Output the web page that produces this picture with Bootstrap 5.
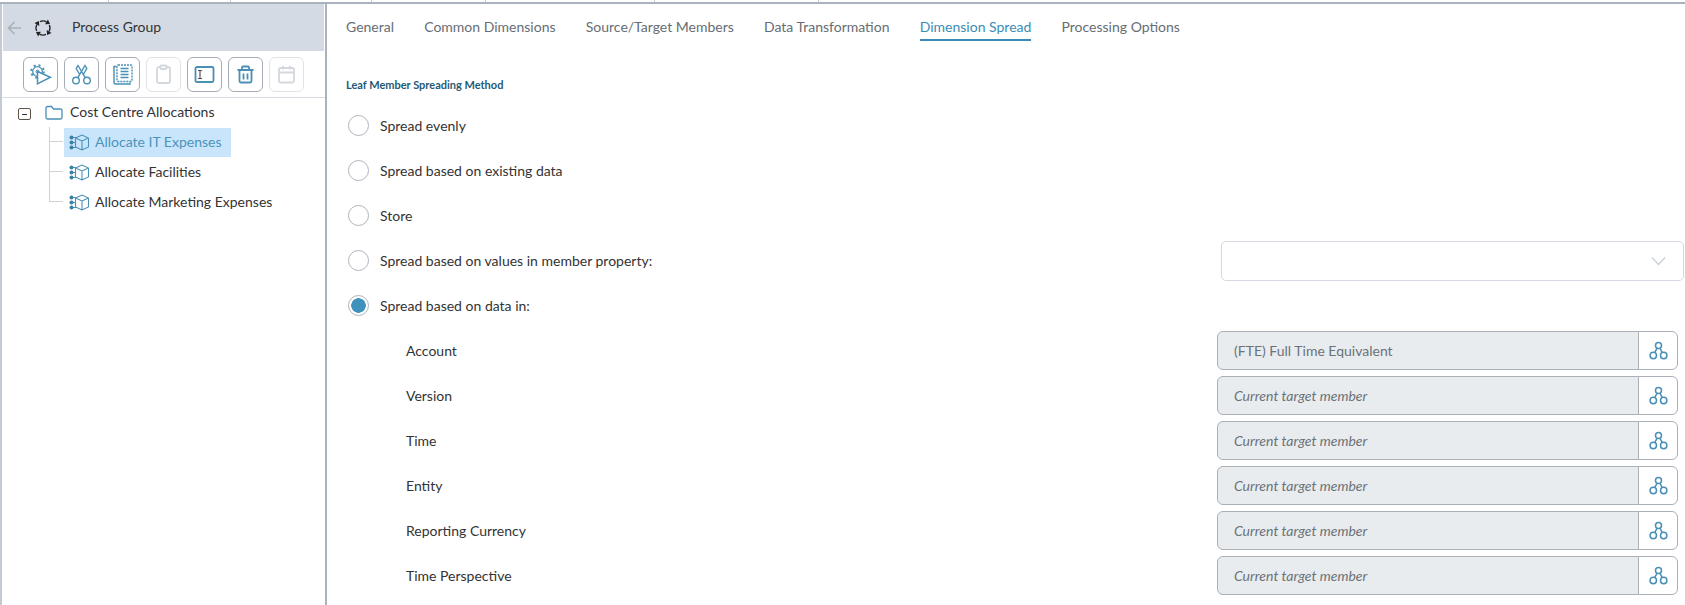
<!DOCTYPE html>
<html lang="en">
<head>
<meta charset="utf-8">
<title>Dimension Spread</title>
<link href="https://cdn.jsdelivr.net/npm/bootstrap@5.3.0/dist/css/bootstrap.min.css" rel="stylesheet">
<style>
html,body{height:605px;overflow:hidden;background:#fff}
body{font-family:Lato,"Liberation Sans",sans-serif;font-size:14px;color:#333}
.top-strip{height:4px;border-bottom:2px solid #a9b2bd;display:flex}
.top-strip i{display:block;height:2px;border-right:1px solid #c5cbd3}
.tick-a{width:109px}.tick-b{width:122px}.tick-c{width:141px}.tick-d{width:114px}.tick-e{width:169px}.tick-f{width:164px}
.shell{height:601px}
.side-pane{width:327px;flex:none;border-right:2px solid #a9b2bd;border-left:2px solid #c3cad2}
.side-head{height:47px;background:#d3dae3;margin-left:1px;margin-right:1px;padding-left:4px;color:#333}
.side-head .arrow{width:15px;margin-right:11px}
.side-head .cyc{width:20px;margin-right:19px}
.txt-up{margin-bottom:2px}
.tool-row{height:47px;padding-left:21px;gap:6px;border-bottom:1px solid #d6dbe2;align-items:center}
.tool-btn{width:35px;height:35px;padding:0;border:1px solid #a5acb5;border-radius:6px;background:#fff;display:flex;align-items:center;justify-content:center;--bs-btn-disabled-opacity:1}
.tool-btn:disabled{border-color:#dfe3e8;background:#fff}
.tool-btn svg{width:25px;height:25px}
.tree-root{padding:0;margin:0;list-style:none}
.root-row{height:29px;padding-left:16px}
.exp-box{width:13px;height:12px;border:1px solid #5c5346;border-radius:2px;display:flex;align-items:center;justify-content:center;margin-right:14px;margin-top:3px}
.exp-box::after{content:"";display:block;width:5px;height:1px;background:#333}
.folder-ic{width:18px;height:15px;margin-right:7px}
.tree-kids{list-style:none;margin:0 0 0 47px;padding:0}
.tree-kid{height:30px;position:relative;display:flex;align-items:center;padding-left:15px}
.tree-kid::before{content:"";position:absolute;left:0;top:0;height:15px;width:14px;border-left:1px solid #cfd3d8;border-bottom:1px solid #cfd3d8}
.tree-kid:not(:last-child)::after{content:"";position:absolute;left:0;top:15px;height:15px;border-left:1px solid #cfd3d8}
.kid-label{height:29px;padding:0 10px 0 5px;display:flex;align-items:center;gap:6px}
.kid-label svg{width:20px;height:17px}
.kid-on{background:#c9e5fb;color:#4a94ba}
.main-pane{min-width:0;padding-left:19px;padding-right:7px}
.tab-bar{height:39px;gap:30.2px;flex-wrap:nowrap;border:0;margin-bottom:0;align-items:flex-start}
.tab-bar .nav-link{padding:13px 0 3px;color:#666d74;border-bottom:2px solid transparent;line-height:19px;font-size:14px}
.tab-bar .nav-link.active{color:#3a8db5;border-bottom:2px solid #3a8db5}
.sect-title{font-size:11px;font-weight:700;color:#1f5a75;margin:35px 0 0;line-height:14px;height:25px}
.opt-row{height:45px;display:flex;align-items:center;justify-content:space-between}
.opt-row .form-check{margin:0;padding:0;display:flex;align-items:center;min-height:0}
.opt-row .form-check-input{width:21px;height:21px;margin:0 0 0 2px;float:none;border:1px solid #aeb4bb;box-shadow:none}
.opt-row .form-check-input:checked{background-color:#fff;border-color:#aeb4bb;background-image:radial-gradient(circle,#3f92bb 0,#3f92bb 7px,#fff 7.5px)}
.opt-row .form-check-label{margin-left:11px;color:#333;opacity:1}
.prop-select{width:463px;height:40px;border:1px solid #d5dae2;border-radius:5px;--bs-form-select-bg-img:none;background-image:none}
.sel-wrap{position:relative;margin-right:-6px}
.sel-wrap svg{position:absolute;right:18px;top:15px;width:15px;height:10px}
.mem-row{height:45px;display:flex;align-items:center;justify-content:space-between;padding-left:60px}
.mem-row .mem-name{color:#333}
.mem-group{width:461px;height:39px;flex-wrap:nowrap}
.mem-group .form-control{height:39px;background:#e9ecef;border:1px solid #a9b0b8;border-radius:6px 0 0 6px;padding:0 16px;font-size:14px;color:#6b7278;opacity:1;font-family:inherit}
.mem-group .form-control::placeholder{font-style:italic;color:#6b7278;opacity:1}
.mem-btn{width:40px;flex:none;padding:0;background:#fff;border:1px solid #a9b0b8;border-radius:0 6px 6px 0;display:flex;align-items:center;justify-content:center}
.mem-btn svg{width:19px;height:19px}
</style>
</head>
<body class="m-0">
<svg width="0" height="0" class="position-absolute" aria-hidden="true">
  <symbol id="cube-ic" viewBox="0 0 20 17"><g fill="none" stroke="#4a90b5" stroke-width="1.100"><path d="M6.500 4 13 1l6.500 3v9L13 16l-6.500-3zM6.500 4l6.500 3 6.500-3M13 7v9M3 3.500h3.500M3 8.500h3.500M3 13.500h3.500"/></g><g fill="#3b80a5"><circle cx="2.500" cy="3.500" r="2"/><circle cx="2.500" cy="8.500" r="2"/><circle cx="2.500" cy="13.500" r="2"/></g></symbol>
  <symbol id="link-ic" viewBox="0 0 19 19"><g fill="none" stroke="#4a90b5" stroke-width="1.500"><circle cx="9.500" cy="4.500" r="3"/><circle cx="4.300" cy="14.500" r="3.200"/><circle cx="14.700" cy="14.500" r="3.200"/><path d="M8 7.300 5.700 11.600M11 7.300l2.300 4.300"/></g></symbol>
  <symbol id="cyc-arm" viewBox="0 0 20 20"><path d="M7 3.700A7 7 0 0 1 13.500 3.900" fill="none" stroke="#222" stroke-width="1.300"/><path d="M17 5.900 14.900 1.500 12.100 6.300z" fill="#222"/></symbol>
</svg>
<div class="top-strip"><i class="tick-a"></i><i class="tick-b"></i><i class="tick-c"></i><i class="tick-d"></i><i class="tick-e"></i><i class="tick-f"></i></div>
<div class="shell d-flex">
  <aside class="side-pane">
    <div class="side-head d-flex align-items-center">
      <svg class="arrow" viewBox="0 0 15 14" fill="none" stroke="#aab0b7" stroke-width="1.600"><path d="M14 7H1.500M7.500 1 1.500 7l6 6"/></svg>
      <svg class="cyc" viewBox="0 0 20 20" aria-hidden="true">
        <use href="#cyc-arm" width="20" height="20"/>
        <use href="#cyc-arm" width="20" height="20" transform="rotate(90 10 10)"/>
        <use href="#cyc-arm" width="20" height="20" transform="rotate(180 10 10)"/>
        <use href="#cyc-arm" width="20" height="20" transform="rotate(270 10 10)"/>
      </svg>
      <span class="txt-up">Process Group</span>
    </div>
    <div class="tool-row d-flex">
      <button class="btn tool-btn" type="button" aria-label="Run">
        <svg viewBox="0 0 25 25" fill="none" stroke="#4a90b5"><circle cx="9.500" cy="9.500" r="4.800" stroke-width="1.300"/><circle cx="9.500" cy="9.500" r="6.300" stroke-width="2" stroke-dasharray="2 3"/><circle cx="9.500" cy="9.500" r="1.500" stroke-width="1"/><path d="M9.500 9.500 22.400 15.200 9.500 21.800z" fill="#fff" stroke-width="1.500"/></svg>
      </button>
      <button class="btn tool-btn" type="button" aria-label="Cut">
        <svg viewBox="0 0 25 25" fill="none" stroke="#4a90b5" stroke-width="1.400"><circle cx="7" cy="18.500" r="3.300"/><circle cx="18" cy="18.500" r="3.300"/><path d="M8.800 15.700 16 3.500 17.800 6.500 14.300 12.500M16.200 15.700 9 3.500 7.200 6.500 10.700 12.500"/></svg>
      </button>
      <button class="btn tool-btn" type="button" aria-label="Copy">
        <svg viewBox="0 0 25 25" fill="none" stroke="#4a90b5" stroke-width="1.400"><path d="M6.500 4.500H4v16a1.500 1.500 0 0 0 1.500 1.500H20v-1.500"/><rect x="7" y="3" width="15" height="16.500" rx="1" stroke-dasharray="2 1"/><path d="M10.500 6.500h8M10.500 9.500h8M10.500 12.500h8M10.500 15.500h8" stroke-width="1.500"/></svg>
      </button>
      <button class="btn tool-btn" type="button" disabled aria-label="Paste">
        <svg viewBox="0 0 25 25" fill="none" stroke="#d3d8de" stroke-width="1.800"><rect x="6" y="5" width="13" height="16" rx="2"/><rect x="9.500" y="3.500" width="6" height="3.500" rx="1" fill="#fff"/></svg>
      </button>
      <button class="btn tool-btn" type="button" aria-label="Rename">
        <svg viewBox="0 0 25 25" fill="none" stroke="#4a90b5" stroke-width="1.800"><rect x="3.500" y="5" width="18" height="15" rx="1.500"/><path d="M6 8.500h4M6 16.500h4M8 8.500v8" stroke="#555" stroke-width="1.200"/></svg>
      </button>
      <button class="btn tool-btn" type="button" aria-label="Delete">
        <svg viewBox="0 0 25 25" fill="none" stroke="#4a90b5" stroke-width="1.800"><path d="M4.500 8h16M9 8V5.500q0-1 1-1h5q1 0 1 1V8M6.500 8v11q0 1.500 1.500 1.500h9q1.500 0 1.500-1.500V8M10.500 11.500v6M14.500 11.500v6"/></svg>
      </button>
      <button class="btn tool-btn" type="button" disabled aria-label="Schedule">
        <svg viewBox="0 0 25 25" fill="none" stroke="#d3d8de" stroke-width="1.800"><rect x="5" y="6" width="15" height="14.500" rx="1.500"/><path d="M5 10.500h15M9 4v3.500M16 4v3.500"/></svg>
      </button>
    </div>
    <ul class="tree-root">
      <li>
        <div class="root-row d-flex align-items-center">
          <span class="exp-box"></span>
          <svg class="folder-ic" viewBox="0 0 18 15" fill="none" stroke="#4a90b5" stroke-width="1.300"><path d="M1 3a1.500 1.500 0 0 1 1.500-1.500h4L8.500 4h7A1.500 1.500 0 0 1 17 5.500v7a1.500 1.500 0 0 1-1.500 1.500h-13A1.500 1.500 0 0 1 1 12.500z"/></svg>
          <span class="txt-up">Cost Centre Allocations</span>
        </div>
        <ul class="tree-kids">
          <li class="tree-kid"><span class="kid-label kid-on"><svg><use href="#cube-ic"/></svg><span class="txt-up">Allocate IT Expenses</span></span></li>
          <li class="tree-kid"><span class="kid-label"><svg><use href="#cube-ic"/></svg><span class="txt-up">Allocate Facilities</span></span></li>
          <li class="tree-kid"><span class="kid-label"><svg><use href="#cube-ic"/></svg><span class="txt-up">Allocate Marketing Expenses</span></span></li>
        </ul>
      </li>
    </ul>
  </aside>
  <main class="main-pane flex-grow-1">
    <nav class="nav tab-bar">
      <a class="nav-link" href="#">General</a>
      <a class="nav-link" href="#">Common Dimensions</a>
      <a class="nav-link" href="#">Source/Target Members</a>
      <a class="nav-link" href="#">Data Transformation</a>
      <a class="nav-link active" href="#">Dimension Spread</a>
      <a class="nav-link" href="#">Processing Options</a>
    </nav>
    <h6 class="sect-title">Leaf Member Spreading Method</h6>
    <div class="opt-row"><div class="form-check"><input class="form-check-input" type="radio" name="spread" id="r1"><label class="form-check-label" for="r1">Spread evenly</label></div></div>
    <div class="opt-row"><div class="form-check"><input class="form-check-input" type="radio" name="spread" id="r2"><label class="form-check-label" for="r2">Spread based on existing data</label></div></div>
    <div class="opt-row"><div class="form-check"><input class="form-check-input" type="radio" name="spread" id="r3"><label class="form-check-label" for="r3">Store</label></div></div>
    <div class="opt-row"><div class="form-check"><input class="form-check-input" type="radio" name="spread" id="r4"><label class="form-check-label" for="r4">Spread based on values in member property:</label></div>
      <div class="sel-wrap"><select class="form-select prop-select" aria-label="Member property"></select><svg viewBox="0 0 15 10" fill="none" stroke="#c9d0d8" stroke-width="1.300"><path d="M1 1.500l6.500 7 6.500-7"/></svg></div></div>
    <div class="opt-row"><div class="form-check"><input class="form-check-input" type="radio" name="spread" id="r5" checked><label class="form-check-label" for="r5">Spread based on data in:</label></div></div>
    <div class="mem-row"><span class="mem-name">Account</span><div class="input-group mem-group"><input class="form-control" disabled value="(FTE) Full Time Equivalent"><button class="btn mem-btn" type="button" aria-label="Select"><svg><use href="#link-ic"/></svg></button></div></div>
    <div class="mem-row"><span class="mem-name">Version</span><div class="input-group mem-group"><input class="form-control" disabled placeholder="Current target member"><button class="btn mem-btn" type="button" aria-label="Select"><svg><use href="#link-ic"/></svg></button></div></div>
    <div class="mem-row"><span class="mem-name">Time</span><div class="input-group mem-group"><input class="form-control" disabled placeholder="Current target member"><button class="btn mem-btn" type="button" aria-label="Select"><svg><use href="#link-ic"/></svg></button></div></div>
    <div class="mem-row"><span class="mem-name">Entity</span><div class="input-group mem-group"><input class="form-control" disabled placeholder="Current target member"><button class="btn mem-btn" type="button" aria-label="Select"><svg><use href="#link-ic"/></svg></button></div></div>
    <div class="mem-row"><span class="mem-name">Reporting Currency</span><div class="input-group mem-group"><input class="form-control" disabled placeholder="Current target member"><button class="btn mem-btn" type="button" aria-label="Select"><svg><use href="#link-ic"/></svg></button></div></div>
    <div class="mem-row"><span class="mem-name">Time Perspective</span><div class="input-group mem-group"><input class="form-control" disabled placeholder="Current target member"><button class="btn mem-btn" type="button" aria-label="Select"><svg><use href="#link-ic"/></svg></button></div></div>
  </main>
</div>
<script src="https://cdn.jsdelivr.net/npm/bootstrap@5.3.0/dist/js/bootstrap.bundle.min.js"></script>
</body>
</html>
